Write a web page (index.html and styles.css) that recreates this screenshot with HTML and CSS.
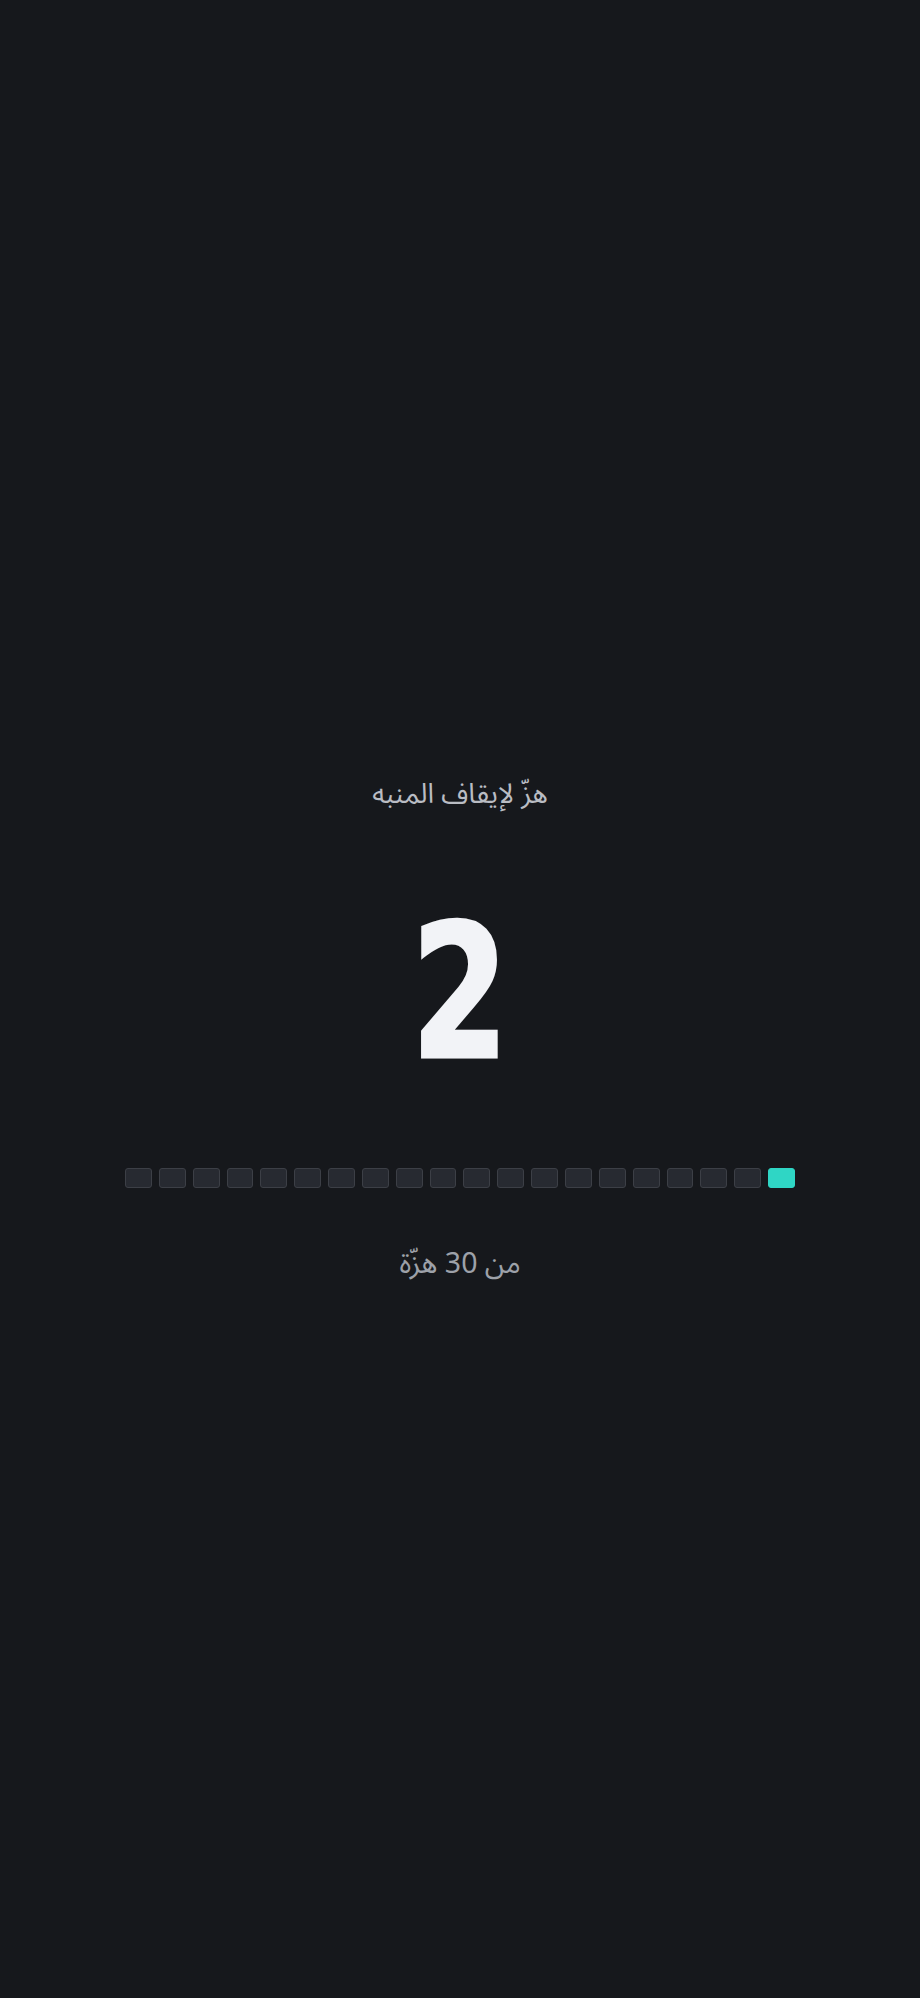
FILE: index.html
```html
<!DOCTYPE html>
<html lang="ar" dir="rtl">
<head>
<meta charset="utf-8">
<title>منبه</title>
<link rel="stylesheet" href="styles.css">
</head>
<body>
<main class="screen">
  <p class="hint">هزّ لإيقاف المنبه</p>
  <div class="count">2</div>
  <div class="bars" dir="ltr">
    <span class="bar"></span><span class="bar"></span><span class="bar"></span><span class="bar"></span><span class="bar"></span>
    <span class="bar"></span><span class="bar"></span><span class="bar"></span><span class="bar"></span><span class="bar"></span>
    <span class="bar"></span><span class="bar"></span><span class="bar"></span><span class="bar"></span><span class="bar"></span>
    <span class="bar"></span><span class="bar"></span><span class="bar"></span><span class="bar"></span><span class="bar on"></span>
  </div>
  <p class="total">من 30 هزّة</p>
</main>
</body>
</html>
```
FILE: styles.css
```css
html, body {
  margin: 0;
  padding: 0;
  background: #16181c;
}
.screen {
  min-height: 1998px;
  box-sizing: border-box;
  display: flex;
  flex-direction: column;
  align-items: center;
  padding-top: 772px;
  font-family: "Noto Sans Arabic", "Noto Sans", "DejaVu Sans", sans-serif;
}
.hint {
  margin: 0;
  font-size: 27.5px;
  line-height: 44px;
  color: #b9bcc3;
}
.count {
  margin-top: 92px;
  font-family: "DejaVu Sans Condensed", "DejaVu Sans", sans-serif;
  font-weight: 700;
  font-size: 185px;
  line-height: 170px;
  color: #f2f3f7;
  -webkit-text-stroke: 3px #f2f3f7;
  transform: scaleX(0.84);
}
.bars {
  margin-top: 90px;
  width: 670px;
  display: flex;
  gap: 7px;
}
.bar {
  flex: 1;
  height: 20px;
  box-sizing: border-box;
  border: 1.5px solid #3c3f46;
  border-radius: 3px;
  background: #272a31;
}
.bar.on {
  background: #2fd6c5;
  border-color: #2fd6c5;
}
.total {
  margin: 54px 0 0;
  font-size: 28.5px;
  line-height: 44px;
  color: #9da1a9;
}
```
